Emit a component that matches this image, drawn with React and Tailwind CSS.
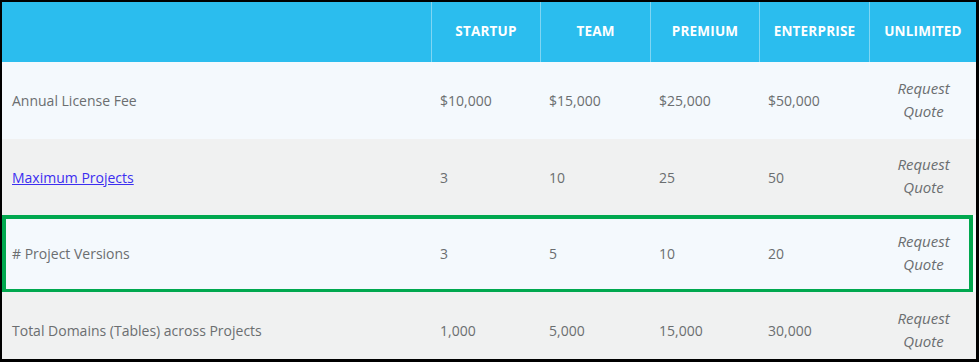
import React from "react";

const cols = "grid grid-cols-[429px_109px_110px_109px_110px_107px]";

const rows = [
  { label: "Annual License Fee", vals: ["$10,000", "$15,000", "$25,000", "$50,000"], bg: "bg-[#f4f9fd]", h: "h-[77px]" },
  { label: "Maximum Projects", link: true, vals: ["3", "10", "25", "50"], bg: "bg-[#f0f1f1]", h: "h-[76px]" },
  { label: "# Project Versions", vals: ["3", "5", "10", "20"], bg: "bg-[#f4f9fd]", h: "h-[77px]", hl: true },
  { label: "Total Domains (Tables) across Projects", vals: ["1,000", "5,000", "15,000", "30,000"], bg: "bg-[#f0f1f1]", h: "h-[77px]" },
];

export default function App() {
  return (
    <div className="w-[979px] h-[362px] bg-black pl-[2px] pt-[2px] pr-[3px] pb-[3px] overflow-hidden" style={{ fontFamily: '"Open Sans", sans-serif' }}>
      <div className="w-full h-full overflow-hidden bg-[#f0f1f1]">
        <div className={`${cols} h-[60px] bg-[#2bbdee] text-white font-bold text-[13.5px] tracking-[0.2px]`}>
          <div />
          {["STARTUP", "TEAM", "PREMIUM", "ENTERPRISE", "UNLIMITED"].map((t) => (
            <div key={t} className="border-l border-[#7fd6f3] flex items-center justify-center pb-[2px]">{t}</div>
          ))}
        </div>
        {rows.map((r) => (
          <div key={r.label} className={`relative ${cols} ${r.h} ${r.bg} text-[14px] text-[#6b6e70]`}>
            <div className="flex items-center pl-[10px]">
              {r.link ? (
                <a href="#" className="text-[#3c2ff0] underline">{r.label}</a>
              ) : (
                <span>{r.label}</span>
              )}
            </div>
            {r.vals.map((v, i) => (
              <div key={i} className="flex items-center pl-[9px]">{v}</div>
            ))}
            <div className="flex flex-col items-center justify-center italic text-[15px] leading-[23px] pl-[2px] pb-[2px]">
              <span>Request</span>
              <span>Quote</span>
            </div>
            {r.hl && (
              <div className="absolute left-0 top-0 w-[971px] h-[78px] border-4 border-[#00a84f] pointer-events-none" />
            )}
          </div>
        ))}
      </div>
    </div>
  );
}
